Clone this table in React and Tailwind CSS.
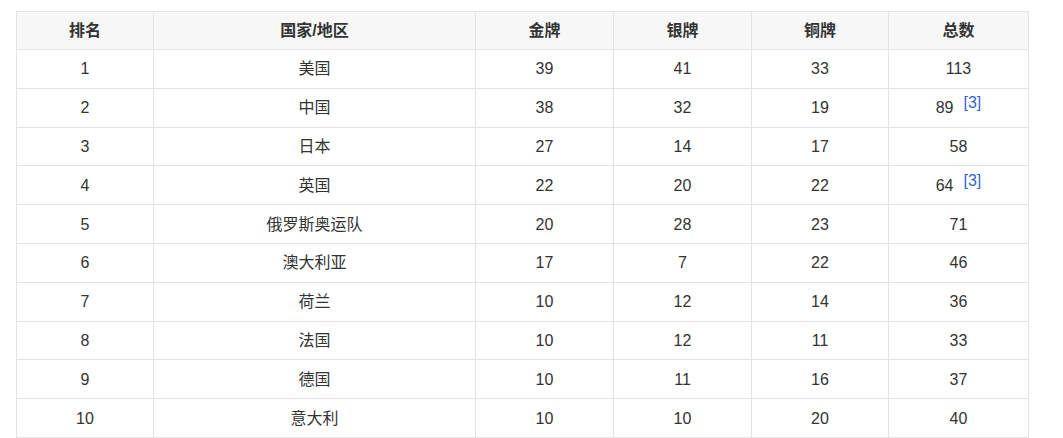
import React from 'react'

const rows = [
  ['1', '美国', '39', '41', '33', '113'],
  ['2', '中国', '38', '32', '19', '89', '[3]'],
  ['3', '日本', '27', '14', '17', '58'],
  ['4', '英国', '22', '20', '22', '64', '[3]'],
  ['5', '俄罗斯奥运队', '20', '28', '23', '71'],
  ['6', '澳大利亚', '17', '7', '22', '46'],
  ['7', '荷兰', '10', '12', '14', '36'],
  ['8', '法国', '10', '12', '11', '33'],
  ['9', '德国', '10', '11', '16', '37'],
  ['10', '意大利', '10', '10', '20', '40'],
]

const headers = ['排名', '国家/地区', '金牌', '银牌', '铜牌', '总数']

function App() {
  return (
    <div className="bg-white w-[1063px] h-[438px] pt-[11px] pl-[16px] font-['Liberation_Sans','Noto_Sans_CJK_SC',sans-serif] text-[16px] text-[#333]">
      <table className="table-fixed border-collapse w-[1012px]">
        <colgroup>
          <col className="w-[137px]" />
          <col className="w-[322px]" />
          <col className="w-[138px]" />
          <col className="w-[138px]" />
          <col className="w-[137px]" />
          <col className="w-[140px]" />
        </colgroup>
        <thead>
          <tr className="h-[38px] bg-[#f7f7f7]">
            {headers.map(h => (
              <th key={h} className="border border-[#e3e3e3] font-bold text-center p-0">{h}</th>
            ))}
          </tr>
        </thead>
        <tbody>
          {rows.map(r => (
            <tr key={r[0]} className="h-[38.8px]">
              {r.slice(0, 5).map((c, i) => (
                <td key={i} className="border border-[#e3e3e3] text-center p-0 pt-[1px]">{c}</td>
              ))}
              <td className="border border-[#e3e3e3] text-center p-0 pt-[1px]">
                {r[5]}
                {r[6] && <span className="text-[#3366cc] text-[16px] leading-none ml-[10px] relative top-[-5px]">{r[6]}</span>}
              </td>
            </tr>
          ))}
        </tbody>
      </table>
    </div>
  )
}

export default App
